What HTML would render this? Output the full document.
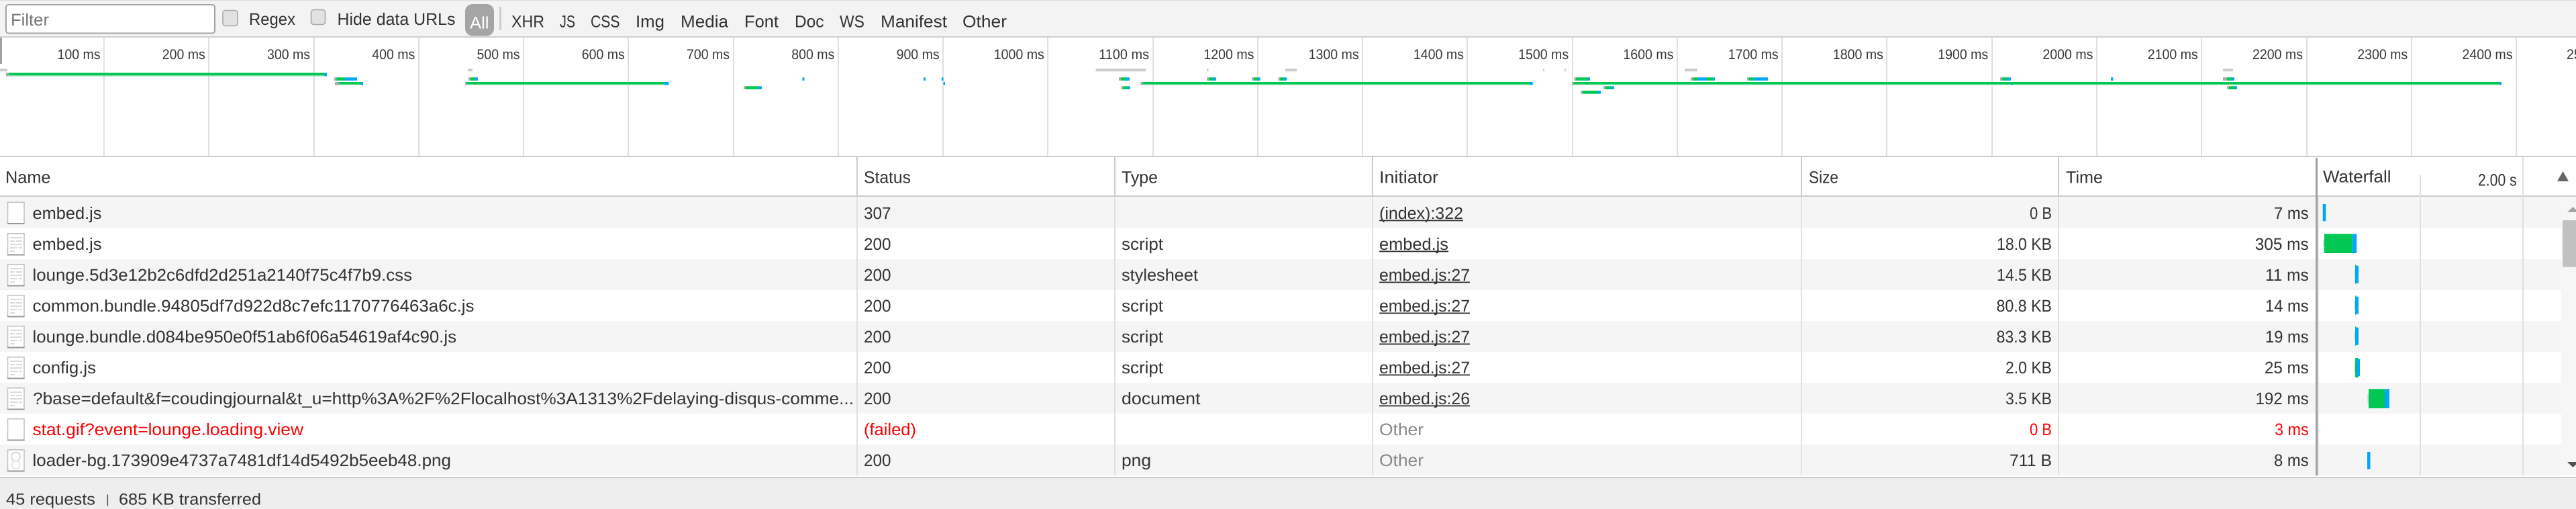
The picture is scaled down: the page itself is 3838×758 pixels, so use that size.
<!DOCTYPE html>
<html>
<head>
<meta charset="utf-8">
<title>Network</title>
<style>
html,body{margin:0;padding:0;background:#fff;width:3838px;height:758px;overflow:hidden}
svg{display:block}
text{font-family:"Liberation Sans",sans-serif;font-size:25px;fill:#333;text-rendering:geometricPrecision}
.tk text{font-size:21px;fill:#383838}
text.f{font-size:24px}
.g{fill:#00c853}.b{fill:#00a8fc}.a{fill:#aaa}.l{fill:#ccc}.d{fill:#e0e0e0}.h{fill:#ccc}.lg{fill:#72d79c}
text.r{fill:#f00}text.o{fill:#888}.u{fill:#303030}
</style>
</head>
<body>
<svg xmlns="http://www.w3.org/2000/svg" width="3838" height="758" viewBox="0 0 3838 758">
<defs>
<g id="ib"><rect x="11.5" y="0.8" width="24.5" height="31.5" fill="#fff" stroke="#c4c4c4" stroke-width="1.6"/><rect x="11" y="31.5" width="25.5" height="2" fill="#999"/></g>
<g id="it"><use href="#ib"/><g fill="#dcdcdc"><rect x="15" y="6" width="18" height="2"/><rect x="15" y="11" width="7" height="2"/><rect x="24" y="11" width="9" height="2"/><rect x="15" y="16" width="18" height="2"/><rect x="15" y="21" width="11" height="2"/><rect x="28" y="21" width="5" height="2"/><rect x="15" y="26" width="7" height="2"/></g></g>
</defs>

<!-- toolbar -->
<rect x="0" y="0" width="3838" height="55" fill="#f3f3f3"/>
<rect x="0" y="0" width="3838" height="1" fill="#ddd"/>
<rect x="0" y="54" width="3838" height="2" fill="#d0d0d0"/>
<rect x="9" y="7" width="311" height="42.5" rx="4" fill="#fff" stroke="#a3a3a3" stroke-width="2"/>
<text x="16" y="38" textLength="57" lengthAdjust="spacingAndGlyphs" style="fill:#757575">Filter</text>
<rect x="332" y="15.5" width="22" height="23" rx="4" fill="#e2e2e2" stroke="#a9a9a9" stroke-width="1.6"/>
<text x="371" y="37" textLength="69" lengthAdjust="spacingAndGlyphs">Regex</text>
<rect x="463.5" y="14.5" width="21" height="22" rx="4" fill="#e2e2e2" stroke="#a9a9a9" stroke-width="1.6"/>
<text x="502.5" y="37" textLength="176" lengthAdjust="spacingAndGlyphs">Hide data URLs</text>
<rect x="693" y="6" width="43" height="47.5" rx="11" fill="#a5a5a5"/>
<text x="700" y="42.7" textLength="28.5" lengthAdjust="spacingAndGlyphs" style="fill:#fff">All</text>
<rect x="744" y="10" width="3" height="35" fill="#ccc"/>
<text x="762" y="40.7" textLength="49" lengthAdjust="spacingAndGlyphs">XHR</text>
<text x="834" y="40.7" textLength="23" lengthAdjust="spacingAndGlyphs">JS</text>
<text x="880" y="40.7" textLength="43.5" lengthAdjust="spacingAndGlyphs">CSS</text>
<text x="947" y="40.7" textLength="43" lengthAdjust="spacingAndGlyphs">Img</text>
<text x="1014" y="40.7" textLength="71" lengthAdjust="spacingAndGlyphs">Media</text>
<text x="1109" y="40.7" textLength="51" lengthAdjust="spacingAndGlyphs">Font</text>
<text x="1184" y="40.7" textLength="43.5" lengthAdjust="spacingAndGlyphs">Doc</text>
<text x="1251" y="40.7" textLength="37" lengthAdjust="spacingAndGlyphs">WS</text>
<text x="1312" y="40.7" textLength="99" lengthAdjust="spacingAndGlyphs">Manifest</text>
<text x="1434" y="40.7" textLength="66" lengthAdjust="spacingAndGlyphs">Other</text>

<!-- overview grid -->
<g class="d">
<rect x="154" y="56" width="2" height="176"/><rect x="310" y="56" width="2" height="176"/><rect x="467" y="56" width="2" height="176"/><rect x="623" y="56" width="2" height="176"/><rect x="779" y="56" width="2" height="176"/><rect x="935" y="56" width="2" height="176"/><rect x="1092" y="56" width="2" height="176"/><rect x="1248" y="56" width="2" height="176"/><rect x="1404" y="56" width="2" height="176"/><rect x="1560" y="56" width="2" height="176"/><rect x="1717" y="56" width="2" height="176"/><rect x="1873" y="56" width="2" height="176"/><rect x="2029" y="56" width="2" height="176"/><rect x="2185" y="56" width="2" height="176"/><rect x="2342" y="56" width="2" height="176"/><rect x="2498" y="56" width="2" height="176"/><rect x="2654" y="56" width="2" height="176"/><rect x="2810" y="56" width="2" height="176"/><rect x="2967" y="56" width="2" height="176"/><rect x="3123" y="56" width="2" height="176"/><rect x="3279" y="56" width="2" height="176"/><rect x="3436" y="56" width="2" height="176"/><rect x="3592" y="56" width="2" height="176"/><rect x="3748" y="56" width="2" height="176"/>
</g>
<rect x="0" y="232" width="3838" height="2" fill="#ccc"/>
<rect x="0" y="56" width="3" height="39" fill="#a0a0a0"/>
<g class="tk">
<text x="85.5" y="88" textLength="64" lengthAdjust="spacingAndGlyphs">100 ms</text>
<text x="241.8" y="88" textLength="64" lengthAdjust="spacingAndGlyphs">200 ms</text>
<text x="398" y="88" textLength="64" lengthAdjust="spacingAndGlyphs">300 ms</text>
<text x="554.3" y="88" textLength="64" lengthAdjust="spacingAndGlyphs">400 ms</text>
<text x="710.5" y="88" textLength="64" lengthAdjust="spacingAndGlyphs">500 ms</text>
<text x="866.8" y="88" textLength="64" lengthAdjust="spacingAndGlyphs">600 ms</text>
<text x="1023" y="88" textLength="64" lengthAdjust="spacingAndGlyphs">700 ms</text>
<text x="1179.3" y="88" textLength="64" lengthAdjust="spacingAndGlyphs">800 ms</text>
<text x="1335.6" y="88" textLength="64" lengthAdjust="spacingAndGlyphs">900 ms</text>
<text x="1480.8" y="88" textLength="75" lengthAdjust="spacingAndGlyphs">1000 ms</text>
<text x="1637.1" y="88" textLength="75" lengthAdjust="spacingAndGlyphs">1100 ms</text>
<text x="1793.4" y="88" textLength="75" lengthAdjust="spacingAndGlyphs">1200 ms</text>
<text x="1949.6" y="88" textLength="75" lengthAdjust="spacingAndGlyphs">1300 ms</text>
<text x="2105.9" y="88" textLength="75" lengthAdjust="spacingAndGlyphs">1400 ms</text>
<text x="2262.1" y="88" textLength="75" lengthAdjust="spacingAndGlyphs">1500 ms</text>
<text x="2418.4" y="88" textLength="75" lengthAdjust="spacingAndGlyphs">1600 ms</text>
<text x="2574.7" y="88" textLength="75" lengthAdjust="spacingAndGlyphs">1700 ms</text>
<text x="2730.9" y="88" textLength="75" lengthAdjust="spacingAndGlyphs">1800 ms</text>
<text x="2887.2" y="88" textLength="75" lengthAdjust="spacingAndGlyphs">1900 ms</text>
<text x="3043.4" y="88" textLength="75" lengthAdjust="spacingAndGlyphs">2000 ms</text>
<text x="3199.7" y="88" textLength="75" lengthAdjust="spacingAndGlyphs">2100 ms</text>
<text x="3356" y="88" textLength="75" lengthAdjust="spacingAndGlyphs">2200 ms</text>
<text x="3512.2" y="88" textLength="75" lengthAdjust="spacingAndGlyphs">2300 ms</text>
<text x="3668.5" y="88" textLength="75" lengthAdjust="spacingAndGlyphs">2400 ms</text>
<text x="3824" y="88" textLength="75" lengthAdjust="spacingAndGlyphs">2500 ms</text>
</g>

<!-- overview bars: row 0 -->
<g class="l">
<rect x="0" y="102.3" width="11" height="4"/><rect x="697" y="102.3" width="7" height="4"/><rect x="1632.6" y="102.3" width="74.4" height="4"/><rect x="1798" y="102.3" width="2.5" height="4"/><rect x="1915" y="102.3" width="17" height="4"/><rect x="2299" y="102.3" width="2" height="4"/><rect x="2331" y="102.3" width="2" height="4"/><rect x="2510" y="102.3" width="19" height="4"/><rect x="3312" y="102.3" width="15" height="4"/>
</g>
<!-- row 1 -->
<rect class="a" x="9" y="108.5" width="4" height="5"/><rect class="g" x="13" y="108.5" width="470" height="3.7"/><rect class="lg" x="13" y="112.2" width="470" height="1.3"/><rect class="b" x="483" y="108.5" width="4" height="5"/>
<!-- row 2 -->
<g>
<rect class="a" x="498" y="115.3" width="3.5" height="4.7"/><rect class="g" x="501.5" y="115.3" width="12.5" height="4.7"/><rect class="b" x="514" y="115.3" width="18" height="4.7"/>
<rect class="a" x="698" y="115.3" width="3" height="4.7"/><rect class="g" x="701" y="115.3" width="7" height="4.7"/><rect class="b" x="708" y="115.3" width="4" height="4.7"/>
<rect class="b" x="1195.5" y="115.3" width="3" height="4.7"/><rect class="b" x="1376" y="115.3" width="3" height="4.7"/><rect class="b" x="1403" y="115.3" width="2.6" height="4.7"/>
<rect class="a" x="1667" y="115.3" width="3" height="4.7"/><rect class="g" x="1670" y="115.3" width="8" height="4.7"/><rect class="b" x="1678" y="115.3" width="5" height="4.7"/>
<rect class="a" x="1798" y="115.3" width="3" height="4.7"/><rect class="g" x="1801" y="115.3" width="7" height="4.7"/><rect class="b" x="1808" y="115.3" width="4" height="4.7"/>
<rect class="a" x="1865" y="115.3" width="3" height="4.7"/><rect class="g" x="1868" y="115.3" width="6" height="4.7"/><rect class="b" x="1874" y="115.3" width="3.5" height="4.7"/>
<rect class="a" x="1904.6" y="115.3" width="2.4" height="4.7"/><rect class="g" x="1907" y="115.3" width="6" height="4.7"/><rect class="b" x="1913" y="115.3" width="4" height="4.7"/>
<rect class="a" x="2345.4" y="115.3" width="2.6" height="4.7"/><rect class="g" x="2348" y="115.3" width="18" height="4.7"/><rect class="b" x="2366" y="115.3" width="3" height="4.7"/>
<rect class="a" x="2519" y="115.3" width="3.4" height="4.7"/><rect class="g" x="2522.4" y="115.3" width="7.6" height="4.7"/><rect class="b" x="2530" y="115.3" width="13" height="4.7"/><rect class="g" x="2543" y="115.3" width="10" height="4.7"/><rect class="b" x="2553" y="115.3" width="2" height="4.7"/>
<rect class="a" x="2603" y="115.3" width="3" height="4.7"/><rect class="g" x="2606" y="115.3" width="6.8" height="4.7"/><rect class="b" x="2612.8" y="115.3" width="21.2" height="4.7"/>
<rect class="a" x="2980" y="115.3" width="3" height="4.7"/><rect class="g" x="2983" y="115.3" width="8" height="4.7"/><rect class="b" x="2991" y="115.3" width="5" height="4.7"/>
<rect class="b" x="3145" y="115.3" width="3.5" height="4.7"/>
<rect class="a" x="3312" y="115.3" width="5.6" height="4.7"/><rect class="g" x="3317.6" y="115.3" width="7.4" height="4.7"/><rect class="b" x="3325" y="115.3" width="4" height="4.7"/>
</g>
<!-- row 3 -->
<g>
<rect class="a" x="499" y="122" width="6" height="4.7"/><rect class="g" x="505" y="122" width="32" height="3.4"/><rect class="lg" x="505" y="125.4" width="32" height="1.3"/><rect class="b" x="537" y="122" width="4" height="4.7"/>
<rect class="a" x="693" y="122" width="2.5" height="4.7"/><rect class="g" x="695.5" y="122" width="294.5" height="3.4"/><rect class="lg" x="695.5" y="125.4" width="294.5" height="1.3"/><rect class="b" x="990" y="122" width="6.5" height="4.7"/>
<rect class="b" x="1405.6" y="122" width="2.4" height="4.7"/>
<rect class="a" x="1699.5" y="122" width="3" height="4.7"/><rect class="g" x="1702.5" y="122" width="577.5" height="3.4"/><rect class="lg" x="1702.5" y="125.4" width="577.5" height="1.3"/><rect class="b" x="2280" y="122" width="3.7" height="4.7"/>
<rect class="a" x="2342" y="122" width="2.4" height="4.7"/><rect class="g" x="2344.4" y="122" width="1379.6" height="3.4"/><rect class="lg" x="2344.4" y="125.4" width="1379.6" height="1.3"/><rect class="b" x="3724" y="122" width="3" height="4.7"/>
<rect class="b" x="2996.4" y="125" width="2.4" height="1.7"/>
</g>
<!-- row 4 -->
<g>
<rect class="a" x="1108" y="128.3" width="3" height="4.7"/><rect class="g" x="1111" y="128.3" width="19.6" height="4.7"/><rect class="b" x="1130.6" y="128.3" width="4.4" height="4.7"/>
<rect class="a" x="1670.4" y="128.3" width="3.1" height="4.7"/><rect class="g" x="1673.5" y="128.3" width="7.1" height="4.7"/><rect class="b" x="1680.6" y="128.3" width="3.4" height="4.7"/>
<rect class="a" x="2389" y="128.3" width="3" height="4.7"/><rect class="g" x="2392" y="128.3" width="8" height="4.7"/><rect class="b" x="2400" y="128.3" width="5" height="4.7"/>
<rect class="a" x="3318" y="128.3" width="3" height="4.7"/><rect class="g" x="3321" y="128.3" width="9" height="4.7"/><rect class="b" x="3330" y="128.3" width="3" height="4.7"/>
</g>
<!-- row 5 -->
<rect class="a" x="2355" y="135" width="3" height="4.7"/><rect class="g" x="2358" y="135" width="22.6" height="4.7"/><rect class="b" x="2380.6" y="135" width="4.4" height="4.7"/>

<!-- table rows background -->
<g fill="#f5f5f5">
<rect x="0" y="293" width="3816" height="47"/><rect x="0" y="386" width="3816" height="46"/><rect x="0" y="478" width="3816" height="46"/><rect x="0" y="570" width="3816" height="46"/><rect x="0" y="662" width="3816" height="46"/>
</g>
<rect x="3816" y="293" width="22" height="417" fill="#f6f6f6"/>
<rect x="0" y="291" width="3838" height="2" fill="#ccc"/>

<!-- column dividers -->
<g class="h">
<rect x="1276" y="234" width="2" height="57"/><rect x="1660" y="234" width="2" height="57"/><rect x="2044" y="234" width="2" height="57"/><rect x="2683" y="234" width="2" height="57"/><rect x="3066" y="234" width="2" height="57"/>
</g>
<g class="d">
<rect x="1276" y="293" width="2" height="417"/><rect x="1660" y="293" width="2" height="417"/><rect x="2044" y="293" width="2" height="417"/><rect x="2683" y="293" width="2" height="417"/><rect x="3066" y="293" width="2" height="417"/>
<rect x="3605" y="261" width="2" height="447"/><rect x="3758" y="234" width="2" height="474"/>
</g>
<rect x="3450" y="235" width="3" height="475" fill="#a0a0a0"/>
<rect x="3453" y="293" width="2" height="415" fill="#e4e4e4"/>

<!-- header -->
<text x="8" y="272.7" textLength="67.5" lengthAdjust="spacingAndGlyphs">Name</text>
<text x="1287" y="272.7" textLength="70" lengthAdjust="spacingAndGlyphs">Status</text>
<text x="1671" y="272.7" textLength="54" lengthAdjust="spacingAndGlyphs">Type</text>
<text x="2055" y="272.7" textLength="88" lengthAdjust="spacingAndGlyphs">Initiator</text>
<text x="2695" y="272.7" textLength="44" lengthAdjust="spacingAndGlyphs">Size</text>
<text x="3078" y="272.7" textLength="55" lengthAdjust="spacingAndGlyphs">Time</text>
<text x="3461" y="271.7" textLength="101.5" lengthAdjust="spacingAndGlyphs">Waterfall</text>
<text x="3692" y="276.7" textLength="57.7" lengthAdjust="spacingAndGlyphs">2.00 s</text>
<path d="M3810 270L3818.5 255L3827 270Z" fill="#666"/>

<!-- icons -->
<use href="#ib" y="300.5"/>
<use href="#it" y="347"/>
<use href="#it" y="393"/>
<use href="#it" y="439"/>
<use href="#it" y="485"/>
<use href="#it" y="531"/>
<use href="#it" y="577"/>
<use href="#ib" y="623"/>
<use href="#ib" y="669"/>
<circle cx="23.5" cy="680" r="6.5" fill="none" stroke="#ccc" stroke-width="1.5"/>
<circle cx="23.5" cy="692" r="6" fill="none" stroke="#e2e2e2" stroke-width="1.5"/>

<!-- names -->
<text x="48.5" y="326" textLength="103" lengthAdjust="spacingAndGlyphs">embed.js</text>
<text x="48.5" y="372" textLength="103" lengthAdjust="spacingAndGlyphs">embed.js</text>
<text x="48.5" y="418" textLength="565.5" lengthAdjust="spacingAndGlyphs">lounge.5d3e12b2c6dfd2d251a2140f75c4f7b9.css</text>
<text x="48.5" y="464" textLength="658" lengthAdjust="spacingAndGlyphs">common.bundle.94805df7d922d8c7efc1170776463a6c.js</text>
<text x="48.5" y="510" textLength="631.5" lengthAdjust="spacingAndGlyphs">lounge.bundle.d084be950e0f51ab6f06a54619af4c90.js</text>
<text x="48.5" y="556" textLength="94.5" lengthAdjust="spacingAndGlyphs">config.js</text>
<text x="49" y="602" textLength="1223" lengthAdjust="spacingAndGlyphs">?base=default&amp;f=coudingjournal&amp;t_u=http%3A%2F%2Flocalhost%3A1313%2Fdelaying-disqus-comme...</text>
<text class="r" x="48.5" y="648" textLength="403.5" lengthAdjust="spacingAndGlyphs">stat.gif?event=lounge.loading.view</text>
<text x="48.5" y="694" textLength="623.5" lengthAdjust="spacingAndGlyphs">loader-bg.173909e4737a7481df14d5492b5eeb48.png</text>

<!-- status -->
<text x="1287" y="326" textLength="40.5" lengthAdjust="spacingAndGlyphs">307</text>
<text x="1287" y="372" textLength="40.5" lengthAdjust="spacingAndGlyphs">200</text>
<text x="1287" y="418" textLength="40.5" lengthAdjust="spacingAndGlyphs">200</text>
<text x="1287" y="464" textLength="40.5" lengthAdjust="spacingAndGlyphs">200</text>
<text x="1287" y="510" textLength="40.5" lengthAdjust="spacingAndGlyphs">200</text>
<text x="1287" y="556" textLength="40.5" lengthAdjust="spacingAndGlyphs">200</text>
<text x="1287" y="602" textLength="40.5" lengthAdjust="spacingAndGlyphs">200</text>
<text class="r" x="1287" y="648" textLength="78" lengthAdjust="spacingAndGlyphs">(failed)</text>
<text x="1287" y="694" textLength="40.5" lengthAdjust="spacingAndGlyphs">200</text>

<!-- type -->
<text x="1671" y="372" textLength="62" lengthAdjust="spacingAndGlyphs">script</text>
<text x="1671" y="418" textLength="114" lengthAdjust="spacingAndGlyphs">stylesheet</text>
<text x="1671" y="464" textLength="62" lengthAdjust="spacingAndGlyphs">script</text>
<text x="1671" y="510" textLength="62" lengthAdjust="spacingAndGlyphs">script</text>
<text x="1671" y="556" textLength="62" lengthAdjust="spacingAndGlyphs">script</text>
<text x="1671" y="602" textLength="117.5" lengthAdjust="spacingAndGlyphs">document</text>
<text x="1671" y="694" textLength="44" lengthAdjust="spacingAndGlyphs">png</text>

<!-- initiator -->
<text x="2055" y="326" textLength="125" lengthAdjust="spacingAndGlyphs">(index):322</text><rect class="u" x="2055" y="327.5" width="125" height="1.8"/>
<text x="2055" y="372" textLength="103" lengthAdjust="spacingAndGlyphs">embed.js</text><rect class="u" x="2055" y="373.5" width="103" height="1.8"/>
<text x="2055" y="418" textLength="135" lengthAdjust="spacingAndGlyphs">embed.js:27</text><rect class="u" x="2055" y="419.5" width="135" height="1.8"/>
<text x="2055" y="464" textLength="135" lengthAdjust="spacingAndGlyphs">embed.js:27</text><rect class="u" x="2055" y="465.5" width="135" height="1.8"/>
<text x="2055" y="510" textLength="135" lengthAdjust="spacingAndGlyphs">embed.js:27</text><rect class="u" x="2055" y="511.5" width="135" height="1.8"/>
<text x="2055" y="556" textLength="135" lengthAdjust="spacingAndGlyphs">embed.js:27</text><rect class="u" x="2055" y="557.5" width="135" height="1.8"/>
<text x="2055" y="602" textLength="135" lengthAdjust="spacingAndGlyphs">embed.js:26</text><rect class="u" x="2055" y="603.5" width="135" height="1.8"/>
<text class="o" x="2055" y="648" textLength="66" lengthAdjust="spacingAndGlyphs">Other</text>
<text class="o" x="2055" y="694" textLength="66" lengthAdjust="spacingAndGlyphs">Other</text>

<!-- size -->
<text x="3024" y="326" textLength="33" lengthAdjust="spacingAndGlyphs">0 B</text>
<text x="2975" y="372" textLength="82" lengthAdjust="spacingAndGlyphs">18.0 KB</text>
<text x="2975" y="418" textLength="82" lengthAdjust="spacingAndGlyphs">14.5 KB</text>
<text x="2974.5" y="464" textLength="82.5" lengthAdjust="spacingAndGlyphs">80.8 KB</text>
<text x="2974.5" y="510" textLength="82.5" lengthAdjust="spacingAndGlyphs">83.3 KB</text>
<text x="2988" y="556" textLength="69" lengthAdjust="spacingAndGlyphs">2.0 KB</text>
<text x="2988" y="602" textLength="69" lengthAdjust="spacingAndGlyphs">3.5 KB</text>
<text class="r" x="3024" y="648" textLength="33" lengthAdjust="spacingAndGlyphs">0 B</text>
<text x="2994" y="694" textLength="63" lengthAdjust="spacingAndGlyphs">711 B</text>

<!-- time -->
<text x="3388" y="326" textLength="51.7" lengthAdjust="spacingAndGlyphs">7 ms</text>
<text x="3359.7" y="372" textLength="80" lengthAdjust="spacingAndGlyphs">305 ms</text>
<text x="3375" y="418" textLength="64.7" lengthAdjust="spacingAndGlyphs">11 ms</text>
<text x="3375" y="464" textLength="64.7" lengthAdjust="spacingAndGlyphs">14 ms</text>
<text x="3375" y="510" textLength="64.7" lengthAdjust="spacingAndGlyphs">19 ms</text>
<text x="3374" y="556" textLength="65.7" lengthAdjust="spacingAndGlyphs">25 ms</text>
<text x="3360.5" y="602" textLength="79.2" lengthAdjust="spacingAndGlyphs">192 ms</text>
<text class="r" x="3389" y="648" textLength="50.7" lengthAdjust="spacingAndGlyphs">3 ms</text>
<text x="3388" y="694" textLength="51.7" lengthAdjust="spacingAndGlyphs">8 ms</text>

<!-- waterfall bars -->
<rect class="b" x="3460.7" y="304" width="4.6" height="25.3"/>
<rect x="3461" y="356.7" width="2" height="11.5" fill="#ddd"/><rect class="g" x="3463" y="348.3" width="41.7" height="28.7"/><rect class="b" x="3504.7" y="348.3" width="6.5" height="28.7"/>
<rect x="3507" y="402.7" width="2" height="12.5" fill="#ddd"/><rect class="g" x="3509" y="394.3" width="1.5" height="28.4"/><rect class="b" x="3509.3" y="395.7" width="4.7" height="26"/>
<rect x="3507" y="448.7" width="2" height="12.5" fill="#ddd"/><rect class="g" x="3509" y="440.3" width="1.5" height="28.4"/><rect class="b" x="3509.3" y="441.7" width="4.7" height="26"/>
<rect x="3507" y="494.7" width="2" height="12.5" fill="#ddd"/><rect class="g" x="3509" y="486.3" width="1.5" height="28.4"/><rect class="b" x="3509.3" y="487.7" width="4.7" height="26"/>
<rect x="3507" y="541" width="2" height="13" fill="#ddd"/><rect class="g" x="3509" y="533" width="5" height="29"/><rect class="b" x="3511" y="535" width="5" height="25"/>
<rect x="3527" y="587" width="2" height="13" fill="#ddd"/><rect class="g" x="3529" y="579.3" width="24" height="28.7"/><rect class="b" x="3553" y="579.3" width="7" height="28.7"/>
<rect class="b" x="3527" y="673" width="4.5" height="25.7"/>

<!-- scrollbar -->
<path d="M3825 316L3833.5 308L3842 316Z" fill="#a3a3a3"/>
<rect x="3818" y="328" width="20" height="69.7" fill="#c1c1c1"/>
<path d="M3825 688L3833.5 696L3842 688Z" fill="#505050"/>

<!-- footer -->
<rect x="0" y="708" width="3838" height="2" fill="#fff"/>
<rect x="0" y="710" width="3838" height="2" fill="#ccc"/>
<rect x="0" y="712" width="3838" height="46" fill="#eee"/>
<text class="f" x="9" y="751.7" textLength="133" lengthAdjust="spacingAndGlyphs">45 requests</text>
<rect x="159.5" y="736.5" width="1.6" height="17" fill="#555"/>
<text class="f" x="177" y="751.7" textLength="212" lengthAdjust="spacingAndGlyphs">685 KB transferred</text>
</svg>
</body>
</html>
